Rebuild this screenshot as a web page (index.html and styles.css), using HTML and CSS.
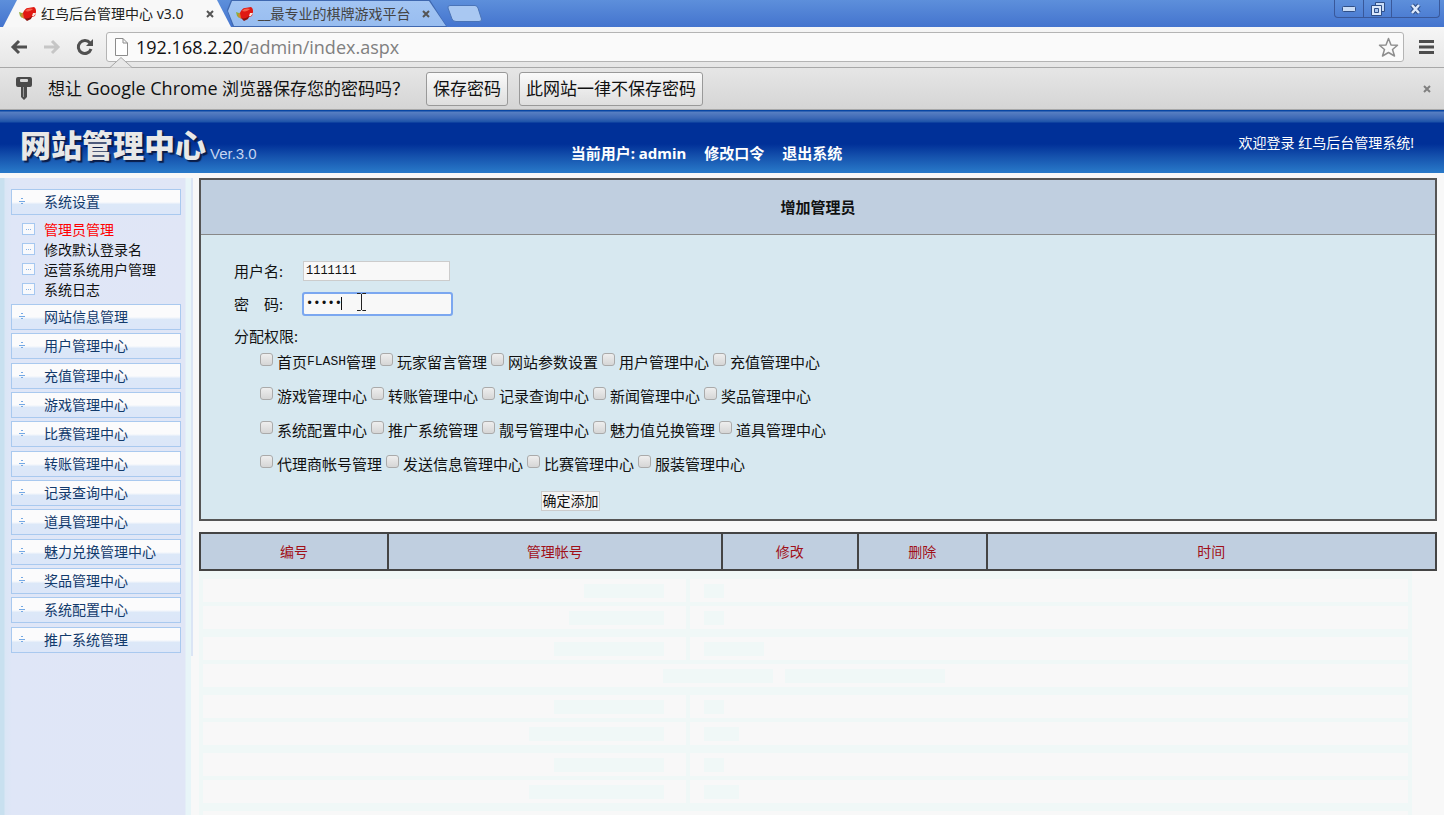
FILE: index.html
```html
<!DOCTYPE html>
<html lang="zh-CN">
<head>
    <meta charset="UTF-8">
    <meta name="viewport" content="width=device-width, initial-scale=1.0">
    <title>红鸟后台管理中心 v3.0</title>
    <link rel="stylesheet" href="styles.css">
</head>
<body>
    <svg width="0" height="0" class="defs" aria-hidden="true">
        <symbol id="bird" viewBox="0 0 18 14">
            <path d="M0 5 L3 6 L6 5 L6 9 L3 11 L1 9 Z" fill="#8fae3a"/>
            <path d="M3 6 L6 7 L5 12 L2 9 Z" fill="#d9822e"/>
            <path d="M4 6 C5 3 7 1 9 1 L15 0 C17 1 17 3 17 5 L16 9 L13 10 C12 13 7 13 5 11 Z" fill="#e01812"/>
            <path d="M6 4 C8 1 12 1 14 2 C12 4 9 5 6 4 Z" fill="#f4604a"/>
            <path d="M14 6 L17 6 L15 9 L13 9 Z" fill="#fbe4dc"/>
            <path d="M5 11 C8 12 11 11 13 9 L12 12 L8 14 Z" fill="#8c1410"/>
        </symbol>
    </svg>

    <div class="tabstrip">
        <div class="tab tab-active">
            <svg class="favicon"><use href="#bird"/></svg>
            <span class="tab-title">红鸟后台管理中心 v3.0</span>
            <button class="tab-close" type="button" aria-label="关闭"><svg viewBox="0 0 8 8"><path d="M1 1 L7 7 M7 1 L1 7"/></svg></button>
        </div>
        <div class="tab">
            <svg class="favicon"><use href="#bird"/></svg>
            <span class="tab-title">__最专业的棋牌游戏平台</span>
            <button class="tab-close" type="button" aria-label="关闭"><svg viewBox="0 0 8 8"><path d="M1 1 L7 7 M7 1 L1 7"/></svg></button>
        </div>
        <button class="tab-new" type="button" aria-label="新标签"><svg viewBox="0 0 36 17"><path d="M3 .5 H28 Q30 .5 31 3 L34.500 14 Q35 16.500 32 16.500 H9 Q6 16.500 5 14 L1 3 Q.5 .5 3 .5 Z" fill="#a9c8f2" stroke="#4a74b8"/></svg></button>
        <div class="window-buttons">
            <button type="button" aria-label="最小化"><svg width="14" height="6" viewBox="0 0 14 6"><rect x=".5" y=".5" width="13" height="5" rx="1" fill="#c9dcf6" stroke="#2f4f88"/></svg></button>
            <button type="button" aria-label="还原"><svg width="14" height="14" viewBox="0 0 14 14"><path d="M4.500 .5 H13.500 V9.500 H4.500 Z" fill="#c9dcf6" stroke="#2f4f88"/><path d="M.5 3.500 H10.500 V13.500 H.5 Z" fill="#dce9fb" stroke="#2f4f88"/><path d="M3.500 6.500 H7.500 V10.500 H3.500 Z" fill="#a9c6f0" stroke="#2f4f88"/></svg></button>
            <button class="wide" type="button" aria-label="关闭"><svg width="13" height="12" viewBox="0 0 13 12"><path d="M3 2 L10 10 M10 2 L3 10" stroke="#2f4f88" stroke-width="4.500"/><path d="M3 2 L10 10 M10 2 L3 10" stroke="#dce9fb" stroke-width="2.500"/></svg></button>
        </div>
    </div>

    <div class="toolbar">
        <button class="nav-button" type="button" aria-label="后退"><svg width="18" height="16" viewBox="0 0 18 16"><path d="M9 2 L3 8 L9 14 M3 8 H17" fill="none" stroke="#505050" stroke-width="3"/></svg></button>
        <button class="nav-button" type="button" aria-label="前进"><svg width="18" height="16" viewBox="0 0 18 16"><path d="M9 2 L15 8 L9 14 M15 8 H1" fill="none" stroke="#c6c6c6" stroke-width="3"/></svg></button>
        <button class="nav-button" type="button" aria-label="刷新"><svg width="18" height="18" viewBox="0 0 18 18"><path d="M14 5 A6.500 6.500 0 1 0 15 11" fill="none" stroke="#505050" stroke-width="3"/><path d="M17 1 V8 H10 Z" fill="#505050"/></svg></button>
        <div class="address">
            <svg width="13" height="18" viewBox="0 0 13 18"><path d="M.5 .5 H8 L12.500 5 V17.500 H.5 Z M8 .5 V5 H12.500" fill="#fff" stroke="#8c8c8c"/></svg>
            <span class="url">192.168.2.20<span class="path">/admin/index.aspx</span></span>
            <svg width="21" height="21" viewBox="0 0 21 21"><path d="M10.500 1.500 L13 8 L19.500 8.200 L14.500 12.500 L16.500 19 L10.500 15.500 L4.500 19 L6.500 12.500 L1.500 8.200 L8 8 Z" fill="#fafafa" stroke="#8e8e8e" stroke-width="1.500" stroke-linejoin="round"/></svg>
        </div>
        <button class="nav-button" type="button" aria-label="菜单"><svg width="15" height="16" viewBox="0 0 15 16"><path d="M0 2.500 H15 M0 8 H15 M0 13.500 H15" stroke="#4d4d4d" stroke-width="3"/></svg></button>
    </div>

    <div class="infobar">
        <svg class="infobar-arrow" width="22" height="11" viewBox="0 0 22 11"><path d="M0 10.500 L11 .5 L22 10.500" fill="#e8e8e8" stroke="#a8a8a8"/></svg>
        <svg class="key" width="16" height="23" viewBox="0 0 16 23"><path d="M2 0 H14 Q16 0 16 2 V8 Q16 10 14 10 H11 V20 L8 23 L5 20 V10 H2 Q0 10 0 8 V2 Q0 0 2 0 Z" fill="#4a4a4a"/><rect x="4" y="2" width="8" height="3" rx="1" fill="#d8d8d8"/><path d="M7.500 10 V20" stroke="#999"/></svg>
        <span class="infobar-text">想让 <span class="product">Google Chrome</span> 浏览器保存您的密码吗？</span>
        <button class="infobar-button" type="button">保存密码</button>
        <button class="infobar-button" type="button">此网站一律不保存密码</button>
        <button class="infobar-close" type="button" aria-label="关闭"><svg viewBox="0 0 8 8"><path d="M1 1 L7 7 M7 1 L1 7"/></svg></button>
    </div>

    <header class="header">
        <div class="brand">
            <h1 class="logo">网站管理中心</h1>
            <span class="version">Ver.3.0</span>
        </div>
        <nav class="user-nav">
            <span>当前用户: admin</span>
            <a href="#">修改口令</a>
            <a href="#">退出系统</a>
        </nav>
        <div class="welcome">欢迎登录 红鸟后台管理系统!</div>
    </header>

    <div class="content">
        <aside class="sidebar">
            <ul class="menu">
                <li class="menu-group">
                    <a class="menu-item" href="#">系统设置</a>
                    <ul class="submenu">
                        <li><a class="current" href="#">管理员管理</a></li>
                        <li><a href="#">修改默认登录名</a></li>
                        <li><a href="#">运营系统用户管理</a></li>
                        <li><a href="#">系统日志</a></li>
                    </ul>
                </li>
                <li><a class="menu-item" href="#">网站信息管理</a></li>
                <li><a class="menu-item" href="#">用户管理中心</a></li>
                <li><a class="menu-item" href="#">充值管理中心</a></li>
                <li><a class="menu-item" href="#">游戏管理中心</a></li>
                <li><a class="menu-item" href="#">比赛管理中心</a></li>
                <li><a class="menu-item" href="#">转账管理中心</a></li>
                <li><a class="menu-item" href="#">记录查询中心</a></li>
                <li><a class="menu-item" href="#">道具管理中心</a></li>
                <li><a class="menu-item" href="#">魅力兑换管理中心</a></li>
                <li><a class="menu-item" href="#">奖品管理中心</a></li>
                <li><a class="menu-item" href="#">系统配置中心</a></li>
                <li><a class="menu-item" href="#">推广系统管理</a></li>
            </ul>
        </aside>
        <div class="divider"></div>

        <main class="main">
            <form class="panel">
                <h2 class="panel-title">增加管理员</h2>
                <div class="panel-body">
                    <div class="field">
                        <label for="username">用户名:</label>
                        <input class="text" type="text" id="username" value="1111111">
                    </div>
                    <div class="field">
                        <label for="password">密　码:</label>
                        <input class="text focused" type="password" id="password" value="11111">
                        <span class="caret"></span>
                        <svg class="ibeam" width="9" height="18" viewBox="0 0 9 18"><path d="M0 .5 H3.500 L4.500 1.500 L5.500 .5 H9 M4.500 1 V17 M0 17.500 H3.500 L4.500 16.500 L5.500 17.500 H9" fill="none" stroke="#222"/></svg>
                    </div>
                    <div class="field rights-title">分配权限:</div>
                    <div class="rights">
                        <label><input type="checkbox">首页<span class="latin">FLASH</span>管理</label>
                        <label><input type="checkbox">玩家留言管理</label>
                        <label><input type="checkbox">网站参数设置</label>
                        <label><input type="checkbox">用户管理中心</label>
                        <label><input type="checkbox">充值管理中心</label>
                    </div>
                    <div class="rights">
                        <label><input type="checkbox">游戏管理中心</label>
                        <label><input type="checkbox">转账管理中心</label>
                        <label><input type="checkbox">记录查询中心</label>
                        <label><input type="checkbox">新闻管理中心</label>
                        <label><input type="checkbox">奖品管理中心</label>
                    </div>
                    <div class="rights">
                        <label><input type="checkbox">系统配置中心</label>
                        <label><input type="checkbox">推广系统管理</label>
                        <label><input type="checkbox">靓号管理中心</label>
                        <label><input type="checkbox">魅力值兑换管理</label>
                        <label><input type="checkbox">道具管理中心</label>
                    </div>
                    <div class="rights">
                        <label><input type="checkbox">代理商帐号管理</label>
                        <label><input type="checkbox">发送信息管理中心</label>
                        <label><input type="checkbox">比赛管理中心</label>
                        <label><input type="checkbox">服装管理中心</label>
                    </div>
                    <button class="submit" type="submit">确定添加</button>
                </div>
            </form>

            <table class="list">
                <tr>
                    <th class="col-id">编号</th>
                    <th class="col-name">管理帐号</th>
                    <th class="col-edit">修改</th>
                    <th class="col-delete">删除</th>
                    <th>时间</th>
                </tr>
            </table>

            <div class="rows" aria-hidden="true">
                <div class="row"><i class="w80"></i><i class="w20"></i></div>
                <div class="row"><i class="w95"></i><i class="w20"></i></div>
                <div class="row"><i class="w110"></i><i class="w60"></i></div>
                <div class="row row-wide"><i class="w110"></i><i class="w160"></i></div>
                <div class="row"><i class="w110"></i><i class="w20"></i></div>
                <div class="row"><i class="w135"></i><i class="w35"></i></div>
                <div class="row"><i class="w110"></i><i class="w20"></i></div>
                <div class="row"><i class="w135"></i><i class="w35"></i></div>
                <div class="row row-last"></div>
            </div>
        </main>
    </div>
</body>
</html>
```
FILE: styles.css
```css
* {
    box-sizing: border-box;
}
body {
    margin: 0;
    height: 100vh;
    display: flex;
    flex-direction: column;
    overflow: hidden;
    background-color: #f8f8f8;
    color: #111;
    font-family: "Noto Sans", "Noto Sans CJK SC", sans-serif;
    font-size: 14px;
}
a {
    color: inherit;
    text-decoration: none;
}
button {
    font: inherit;
    color: inherit;
    padding: 0;
    border: none;
    background: none;
    cursor: pointer;
}
svg {
    display: block;
    flex: none;
}
ul {
    list-style: none;
    margin: 0;
    padding: 0;
}
.defs {
    position: absolute;
}

/* browser tabs */
.tabstrip {
    flex: none;
    display: flex;
    height: 27px;
    padding-left: 3px;
    background: linear-gradient(#5d8fdb, #4474ce);
}
.tab {
    position: relative;
    z-index: 0;
    display: flex;
    align-items: center;
    width: 220px;
    padding: 0 17px 0 9px;
    margin-left: -4px;
    color: #444;
    background-color: #3f68b0;
    clip-path: polygon(0 10px, 4px 0, calc(100% - 17px) 0, 100% 100%, 6px 100%);
}
.tab::before {
    content: "";
    position: absolute;
    z-index: -1;
    inset: 1px 1px 1px;
    background: linear-gradient(#a3c5f3, #98bdf0);
    clip-path: polygon(0 10px, 4px 0, calc(100% - 17px) 0, 100% 100%, 6px 100%);
}
.tab-active {
    width: 228px;
    margin-left: 0;
    padding: 0 17px 0 16px;
    color: #222;
    background: #f8f8f8;
    clip-path: polygon(14px 0, calc(100% - 14px) 0, 100% 100%, 0 100%);
}
.tab-active::before {
    display: none;
}
.favicon {
    width: 18px;
    height: 14px;
}
.tab-title {
    flex: 1;
    margin-left: 4px;
    line-height: 20px;
    white-space: nowrap;
}
.tab-close svg,
.infobar-close svg {
    width: 8px;
    height: 8px;
    fill: none;
    stroke: #555;
    stroke-width: 2;
}
.tab-new {
    align-self: center;
}
.tab-new svg {
    width: 36px;
    height: 17px;
}
.window-buttons {
    display: flex;
    height: 18px;
    margin: 0 4px 0 auto;
    border: 1px solid #39589a;
    border-top: none;
    border-radius: 0 0 4px 4px;
}
.window-buttons button {
    display: flex;
    align-items: center;
    justify-content: center;
    width: 28px;
}
.window-buttons .wide {
    width: 48px;
}
.window-buttons button + button {
    border-left: 1px solid #39589a;
}

/* address bar */
.toolbar {
    flex: none;
    display: flex;
    align-items: center;
    gap: 15px;
    height: 40px;
    padding: 0 10px;
    background: linear-gradient(#f6f6f6, #e6e6e6);
}
.address {
    flex: 1;
    display: flex;
    align-items: center;
    gap: 8px;
    height: 30px;
    margin-left: -3px;
    padding: 0 4px 0 8px;
    background-color: #fafafa;
    border: 1px solid #b4b4b4;
    border-radius: 3px;
}
.url {
    flex: 1;
    font-family: "Open Sans", sans-serif;
    font-size: 18px;
    line-height: 24px;
}
.path {
    color: #808080;
}
.infobar {
    flex: none;
    position: relative;
    display: flex;
    align-items: center;
    height: 43px;
    padding: 0 13px 0 16px;
    background: linear-gradient(#e6e6e6, #d5d5d5);
    border-top: 1px solid #a8a8a8;
    border-bottom: 1px solid #a8a8a8;
    font-size: 17px;
}
.infobar-arrow {
    position: absolute;
    left: 110px;
    top: -11px;
}
.infobar-text {
    margin: 0 17px 0 16px;
    line-height: 24px;
    font-family: "Open Sans", "Noto Sans CJK SC", sans-serif;
}
.product {
    font-size: 18px;
}
.infobar-button {
    height: 34px;
    margin-right: 11px;
    padding: 0 6px;
    line-height: 24px;
    background: linear-gradient(#fafafa, #dedede);
    border: 1px solid #999;
    border-radius: 3px;
}
.infobar-close {
    margin-left: auto;
}
.infobar-close svg {
    stroke: #808080;
}

/* page header */
.header {
    flex: none;
    display: grid;
    grid-template-columns: 38% 1fr auto;
    height: 63px;
    padding: 0 30px 0 20px;
    color: #fff;
    background: linear-gradient(#0846a4 0, #0846a4 1px, #587fc2 2px, #3c68b6 8px, #1c52a8 12px, #003098 13px, #003098 34px, #1450ac 46px, #2878c8 62px);
}
.brand {
    display: flex;
    gap: 4px;
    padding-top: 13px;
}
.logo {
    margin: 0;
    font-size: 31px;
    line-height: 44px;
    font-weight: 900;
    color: #e8e8e8;
    text-shadow: 2px 2px 1px #0a1c48;
}
.version {
    font-family: "Liberation Sans", sans-serif;
    font-size: 15px;
    line-height: 20px;
    padding-top: 21px;
    color: #c4d4f0;
}
.user-nav {
    display: flex;
    gap: 18px;
    padding: 33px 0 0 21px;
    font-size: 15px;
    font-weight: bold;
    line-height: 20px;
}
.welcome {
    padding-top: 23px;
    line-height: 20px;
}

/* side menu */
.content {
    flex: 1;
    display: flex;
    align-items: stretch;
    min-height: 0;
    padding-top: 5px;
}
.sidebar {
    flex: none;
    width: 191px;
    padding: 11px 10px 0 11px;
    background: linear-gradient(90deg, #c8e0ef 4px, #dae6f5 5px, #dfe6f7 12px, #e0e6f6 185px, #e8f5f8 186px);
}
.divider {
    flex: none;
    width: 2px;
    height: 478px;
    background-color: #dbe5f5;
}
.menu > li {
    margin-bottom: 4px;
}
.menu > li:not(.menu-group) {
    margin-bottom: 3px;
}
.menu > li:nth-child(3n) {
    margin-bottom: 4px;
}
.menu-group .submenu {
    padding: 5px 0 0;
}
.menu-item {
    position: relative;
    display: block;
    height: 26px;
    padding-left: 32px;
    line-height: 24px;
    color: #123a6c;
    border: 1px solid #a9c9ef;
    background: linear-gradient(#fbfbfc 50%, #dce8f8 60%, #dce6f8);
}
.menu-item::before {
    content: "";
    position: absolute;
    left: 7px;
    top: 8px;
    width: 6px;
    height: 6px;
    background:
        linear-gradient(#75a9e4, #75a9e4) center / 6px 1px no-repeat,
        linear-gradient(#75a9e4, #75a9e4) 2px 0 / 2px 1px no-repeat,
        linear-gradient(#75a9e4, #75a9e4) 2px 5px / 2px 1px no-repeat;
}
.submenu {
    line-height: 20px;
}
.submenu a {
    position: relative;
    display: block;
    padding-left: 33px;
}
.submenu a::before {
    content: "";
    position: absolute;
    left: 11px;
    top: 3px;
    width: 11px;
    height: 10px;
    border: 1px solid #a6c8f0;
    background:
        repeating-linear-gradient(90deg, #86b3ea 0, #86b3ea 1px, #f8f9fc 1px, #f8f9fc 2px) center / 5px 1px no-repeat,
        #f8f9fc;
}
.submenu .current {
    color: #f00;
}

/* admin form */
.main {
    flex: 1;
    min-width: 0;
    padding: 0 7px 0 6px;
}
.panel {
    border: 2px solid #555;
    background-color: #d7e8f0;
    font-size: 15px;
}
.panel-title {
    margin: 0;
    padding: 17px 0;
    font-size: 15px;
    line-height: 20px;
    text-align: center;
    background-color: #c0cfe0;
    border-bottom: 1px solid #888;
}
.panel-body {
    padding: 19px 33px 8px;
}
.field {
    position: relative;
    display: flex;
    align-items: center;
    height: 33px;
}
.field label {
    width: 69px;
}
.text {
    width: 147px;
    height: 20px;
    padding: 1px 2px;
    border: 1px solid #ccc;
    background-color: #f8f8f8;
    color: #111;
    font-family: "Liberation Mono", monospace;
    font-size: 12px;
}
.focused {
    outline: 2px solid #7ba7f0;
    outline-offset: -1px;
    border-radius: 2px;
    height: 22px;
    width: 149px;
}
.caret {
    position: absolute;
    left: 107px;
    top: 10px;
    width: 1px;
    height: 13px;
    background-color: #111;
}
.ibeam {
    position: absolute;
    left: 123px;
    top: 6px;
}
.rights-title {
    height: 30px;
}
.rights {
    display: flex;
    gap: 4px;
    height: 34px;
    padding-left: 26px;
}
.rights label {
    display: flex;
    white-space: nowrap;
    line-height: 24px;
}
.rights input {
    appearance: none;
    width: 13px;
    height: 13px;
    margin: 3px 4px 0 0;
    border: 1px solid #aaa;
    border-radius: 3px;
    background: linear-gradient(#eee, #d6d6d6);
}
.latin {
    font-family: "Liberation Mono", monospace;
    font-size: 13px;
}
.submit {
    display: block;
    margin: 5px 0 0 307px;
    height: 20px;
    width: 59px;
    font-size: 14px;
    line-height: 18px;
    white-space: nowrap;
    background-color: #f4f4f4;
    border: 1px solid #ccc;
}

/* admin list */
.list {
    width: 100%;
    margin-top: 11px;
    table-layout: fixed;
    border-collapse: collapse;
    border: 2px solid #444;
    background-color: #c0cfe0;
}
.list th {
    height: 37px;
    padding: 0 0 2px;
    border: 2px solid #444;
    font-weight: normal;
    color: #a01018;
}
.col-id {
    width: 188px;
}
.col-name {
    width: 27%;
}
.col-edit {
    width: 11%;
}
.col-delete {
    width: 129px;
}
.rows {
    width: 98%;
    border: solid #f0f8f7;
    border-width: 0 4px;
}
.row {
    display: grid;
    grid-template-columns: 489px 1fr;
    align-items: center;
    height: 31px;
    border-top: 8px solid #f0f8f7;
    background: linear-gradient(#f0f8f7, #f0f8f7) 483px 0 / 4px 100% no-repeat;
}
.row:nth-child(even) {
    height: 27px;
    border-top-width: 4px;
}
.row i {
    height: 14px;
    margin-left: 12px;
    background-color: #f0f8f7;
}
.row i:first-child {
    justify-self: end;
    margin-right: 28px;
}
.row .w20 {
    width: 20px;
}
.row .w35 {
    width: 35px;
}
.row .w60 {
    width: 60px;
}
.row .w80 {
    width: 80px;
}
.row .w95 {
    width: 95px;
}
.row .w110 {
    width: 110px;
}
.row .w135 {
    width: 135px;
}
.row .w160 {
    width: 160px;
}
.row-wide {
    grid-template-columns: 570px 1fr;
    background: none;
}
.row-wide i:first-child {
    margin-right: 0;
}
.row-last {
    background: none;
}
```
